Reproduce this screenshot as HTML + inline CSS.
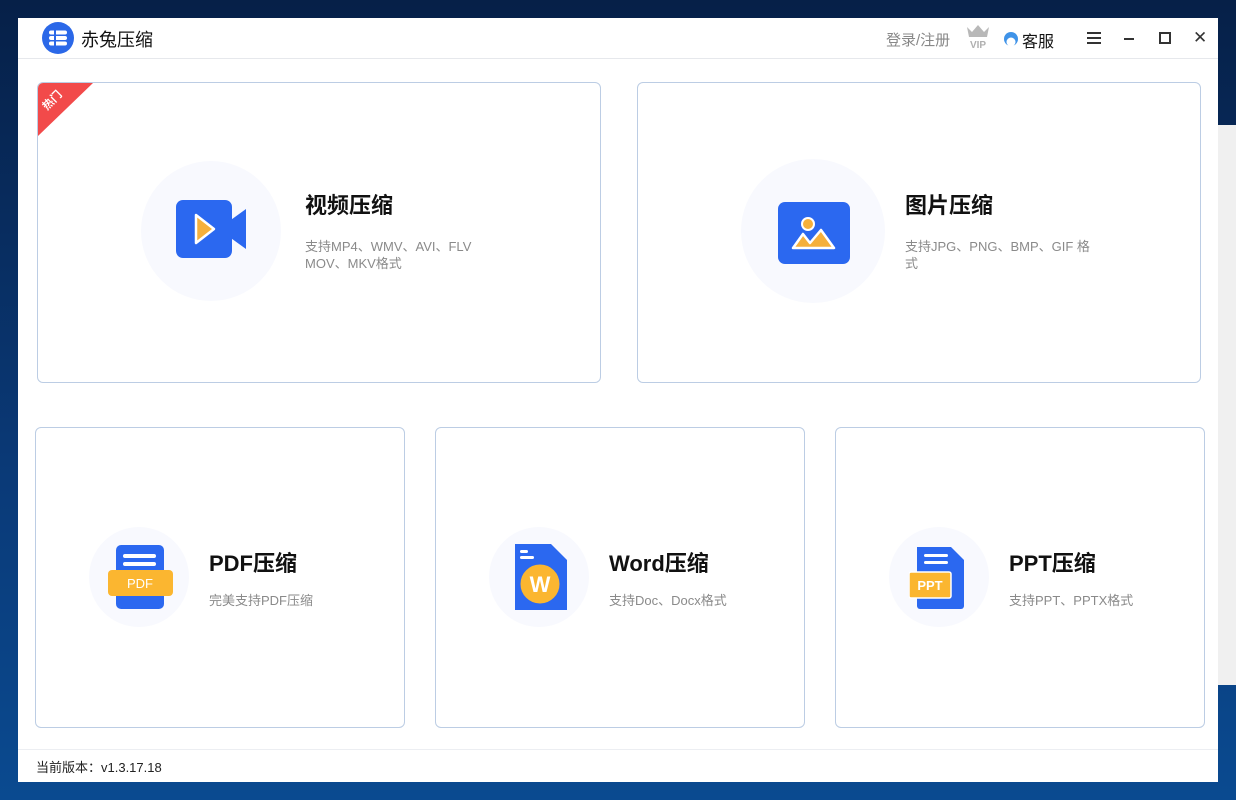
<!DOCTYPE html><html><head><meta charset="utf-8"><style>
*{margin:0;padding:0;box-sizing:border-box}
body{width:1236px;height:800px;overflow:hidden;background:linear-gradient(180deg,#062048 0%,#0a3a78 60%,#0a4a90 100%);font-family:"Liberation Sans","Noto Sans CJK SC",sans-serif;position:relative}
.strip{position:absolute;left:1218px;top:125px;width:18px;height:560px;background:#f0f0f0}
.win{position:absolute;left:18px;top:18px;width:1200px;height:764px;background:#fff}
.hdr{position:absolute;left:0;top:0;width:1200px;height:41px;border-bottom:1px solid #e6e8ec}
.card{position:absolute;border:1.5px solid #bccde4;border-radius:6px;background:#fff;overflow:hidden}
.circ{position:absolute;border-radius:50%;background:#f8f9fe}
.t{position:absolute;font-weight:bold;color:#111;white-space:nowrap}
.d{position:absolute;font-size:13px;color:#8a8a8a;line-height:17px}
.ft{position:absolute;left:0;top:731px;width:1200px;border-top:1px solid #eceef2;height:33px}
</style></head><body>
<div class="strip"></div>
<div class="win">
<div class="hdr">
<svg style="position:absolute;left:24px;top:4px" width="32" height="32" viewBox="0 0 32 32"><circle cx="16" cy="16" r="16" fill="#2b68e8"/><rect x="7" y="8.5" width="18" height="4" rx="2" fill="#fff"/><rect x="7" y="14" width="18" height="4" rx="2" fill="#fff"/><rect x="7" y="19.5" width="18" height="4" rx="2" fill="#fff"/><rect x="12" y="8" width="2" height="16" fill="#2b68e8"/></svg>
<div style="position:absolute;left:63px;top:8px;font-size:18px;color:#111">赤兔压缩</div>
<div style="position:absolute;left:868px;top:11px;font-size:15px;color:#888">登录/注册</div>
<svg style="position:absolute;left:947px;top:5px" width="26" height="28" viewBox="0 0 26 28"><path d="M2 4l5 5 6-7 6 7 5-5-2 10H4z" fill="#b8b8b8"/><text x="13" y="25" font-size="10" font-weight="bold" fill="#b0b0b0" text-anchor="middle" font-family="Liberation Sans">VIP</text></svg>
<svg style="position:absolute;left:986px;top:13px" width="14" height="16" viewBox="0 0 14 16"><circle cx="7" cy="8" r="7" fill="#3f93e8"/><circle cx="7" cy="11" r="4.5" fill="#fff"/></svg>
<div style="position:absolute;left:1004px;top:10px;font-size:16px;color:#111">客服</div>
<div style="position:absolute;left:1069px;top:14px;width:14px;height:12px;border-top:2px solid #333;border-bottom:2px solid #333"><div style="margin-top:3px;height:2px;background:#333"></div></div>
<div style="position:absolute;left:1106px;top:20px;width:10px;height:2px;background:#333"></div>
<div style="position:absolute;left:1141px;top:14px;width:12px;height:12px;border:2px solid #333"></div>
<div style="position:absolute;left:1175px;top:10px;font-size:17px;color:#333">✕</div>
</div>

<div class="card" style="left:19px;top:64px;width:564px;height:301px">
<div style="position:absolute;left:0;top:0;width:55px;height:53px;background:#f24a4a;clip-path:polygon(0 0,100% 0,0 100%)"></div>
<div style="position:absolute;left:3px;top:9px;color:#fff;font-size:11px;font-weight:bold;transform:rotate(-45deg)">热门</div>
<div class="circ" style="left:103px;top:78px;width:140px;height:140px"></div>
<svg style="position:absolute;left:138px;top:117px" width="72" height="60" viewBox="0 0 72 60"><rect x="0" y="0" width="56" height="58" rx="7" fill="#2b68f0"/><path d="M52 22l18-13v40l-18-13z" fill="#2b68f0"/><path d="M20 15l18 14-18 14z" fill="#f5b03c" stroke="#fff" stroke-width="2.5" stroke-linejoin="round"/></svg>
<div class="t" style="left:267px;top:105px;font-size:22px">视频压缩</div>
<div class="d" style="left:267px;top:155px">支持MP4、WMV、AVI、FLV<br>MOV、MKV格式</div>
</div>
<div class="card" style="left:619px;top:64px;width:564px;height:301px">
<div class="circ" style="left:103px;top:76px;width:144px;height:144px"></div>
<svg style="position:absolute;left:140px;top:119px" width="72" height="62" viewBox="0 0 72 62"><rect width="72" height="62" rx="7" fill="#2b68f0"/><circle cx="30" cy="22" r="6" fill="#f5b03c" stroke="#fff" stroke-width="2"/><path d="M15 46l10-14 7 9 11-13 13 18z" fill="#f5b03c" stroke="#fff" stroke-width="2.5" stroke-linejoin="round"/></svg>
<div class="t" style="left:267px;top:105px;font-size:22px">图片压缩</div>
<div class="d" style="left:267px;top:155px">支持JPG、PNG、BMP、GIF 格<br>式</div>
</div>
<div class="card" style="left:17px;top:409px;width:370px;height:301px">
<div class="circ" style="left:53px;top:99px;width:100px;height:100px"></div>
<svg style="position:absolute;left:72px;top:117px" width="66" height="66" viewBox="0 0 66 66"><rect x="8" y="0" width="48" height="64" rx="5" fill="#2b68f0"/><rect x="15" y="9" width="33" height="4" rx="2" fill="#fff"/><rect x="15" y="17" width="33" height="4" rx="2" fill="#fff"/><rect x="0" y="25" width="65" height="26" rx="4" fill="#fbb630"/><text x="32" y="43" font-size="13" fill="#fff" text-anchor="middle" font-family="Liberation Sans">PDF</text></svg>
<div class="t" style="left:173px;top:118px;font-size:22px">PDF压缩</div>
<div class="d" style="left:173px;top:164px">完美支持PDF压缩</div>
</div>
<div class="card" style="left:417px;top:409px;width:370px;height:301px">
<div class="circ" style="left:53px;top:99px;width:100px;height:100px"></div>
<svg style="position:absolute;left:77px;top:116px" width="56" height="68" viewBox="0 0 56 68"><path d="M2 0h36l16 16v50H2z" fill="#2b68f0"/><rect x="7" y="6" width="8" height="3" rx="1.5" fill="#fff"/><rect x="7" y="12" width="14" height="3" rx="1.5" fill="#fff"/><circle cx="27" cy="40" r="20" fill="#fbb630" stroke="#2b68f0" stroke-width="1"/><text x="27" y="48" font-size="22" font-weight="bold" fill="#fff" text-anchor="middle" font-family="Liberation Sans">W</text></svg>
<div class="t" style="left:173px;top:118px;font-size:22px">Word压缩</div>
<div class="d" style="left:173px;top:164px">支持Doc、Docx格式</div>
</div>
<div class="card" style="left:817px;top:409px;width:370px;height:301px">
<div class="circ" style="left:53px;top:99px;width:100px;height:100px"></div>
<svg style="position:absolute;left:73px;top:119px" width="62" height="62" viewBox="0 0 62 62"><path d="M8 0h34l13 13v46a3 3 0 0 1-3 3H11a3 3 0 0 1-3-3z" fill="#2b68f0"/><rect x="15" y="7" width="24" height="3" rx="1.5" fill="#fff"/><rect x="15" y="14" width="24" height="3" rx="1.5" fill="#fff"/><rect x="0" y="25" width="42" height="26" rx="2" fill="#fbb630" stroke="#fff" stroke-width="1.5"/><text x="21" y="43" font-size="13" font-weight="bold" fill="#fff" text-anchor="middle" font-family="Liberation Sans">PPT</text></svg>
<div class="t" style="left:173px;top:118px;font-size:22px">PPT压缩</div>
<div class="d" style="left:173px;top:164px">支持PPT、PPTX格式</div>
</div>
<div class="ft"><div style="position:absolute;left:18px;top:7px;font-size:13px;color:#222">当前版本：v1.3.17.18</div></div>
</div>
</body></html>
